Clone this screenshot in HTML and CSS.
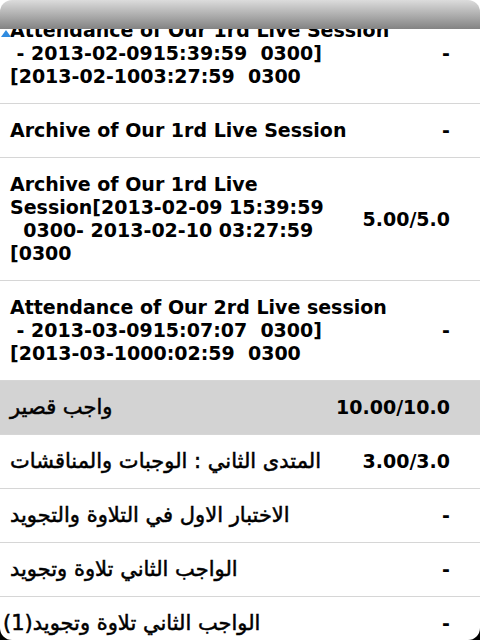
FILE: index.html
```html
<!DOCTYPE html>
<html>
<head>
    <title>Grades</title>
    <link rel="stylesheet" href="styles.css">
</head>
<body>
    <div class="screen">
        <div class="titlebar"></div>
        <span class="scroll-hint"></span>

        <div class="grades">
            <div class="row">
                <div class="item">Attendance of Our 1rd Live Session<br>&nbsp;- 2013-02-0915:39:59&nbsp;&nbsp;0300]<br>[2013-02-1003:27:59&nbsp;&nbsp;0300</div>
                <div class="grade">-</div>
            </div>
            <div class="row">
                <div class="item">Archive of Our 1rd Live Session</div>
                <div class="grade">-</div>
            </div>
            <div class="row">
                <div class="item">Archive of Our 1rd Live<br>Session[2013-02-09 15:39:59<br>&nbsp;&nbsp;0300- 2013-02-10 03:27:59<br>[0300</div>
                <div class="grade">5.00/5.0</div>
            </div>
            <div class="row">
                <div class="item">Attendance of Our 2rd Live session<br>&nbsp;- 2013-03-0915:07:07&nbsp;&nbsp;0300]<br>[2013-03-1000:02:59&nbsp;&nbsp;0300</div>
                <div class="grade">-</div>
            </div>
            <div class="row row-shaded">
                <div class="item item-ar">واجب قصير</div>
                <div class="grade">10.00/10.0</div>
            </div>
            <div class="row">
                <div class="item item-ar">المتدى الثاني : الوجبات والمناقشات</div>
                <div class="grade">3.00/3.0</div>
            </div>
            <div class="row">
                <div class="item item-ar">الاختبار الاول في التلاوة والتجويد</div>
                <div class="grade">-</div>
            </div>
            <div class="row">
                <div class="item item-ar">الواجب الثاني تلاوة وتجويد</div>
                <div class="grade">-</div>
            </div>
            <div class="row">
                <div class="item item-ar item-tight"><span dir="rtl">الواجب الثاني تلاوة وتجويد(1)</span></div>
                <div class="grade">-</div>
            </div>
        </div>
    </div>
</body>
</html>
```

FILE: styles.css
```css
html {
    background-color: #000;
}
body {
    margin: 0;
    font-family: "DejaVu Sans", sans-serif;
    font-size: 19px;
    font-weight: bold;
    line-height: 23px;
    color: #000;
}
.screen {
    position: relative;
    height: 640px;
    overflow: hidden;
    background-color: #fff;
    border-radius: 0 0 12px 12px;
}
.titlebar {
    position: absolute;
    top: 0;
    left: 0;
    right: 0;
    height: 29px;
    border-radius: 12px 12px 0 0;
    background: linear-gradient(#dcdcdc, #b4b4b4 45%, #838383);
    z-index: 2;
}
.scroll-hint {
    position: absolute;
    top: 30px;
    left: 1px;
    width: 0;
    height: 0;
    border-left: 5px solid transparent;
    border-right: 5px solid transparent;
    border-bottom: 7px solid #2f8be0;
    z-index: 3;
}
.grades {
    padding-top: 4px;
}
.row {
    display: flex;
    align-items: center;
    border-bottom: 1px solid #d6d6d6;
}
.row-shaded {
    background-color: #d3d3d3;
}
.item {
    flex: 1;
    padding: 15px 10px;
    white-space: nowrap;
}
/* arabic titles fall back to a faux bold on the device */
.item-ar {
    font-size: 21px;
    font-weight: normal;
    -webkit-text-stroke: 0.5px #000;
}
.item-tight {
    padding-left: 3px;
}
.grade {
    padding: 15px 30px 15px 10px;
    text-align: right;
    white-space: nowrap;
}
```
